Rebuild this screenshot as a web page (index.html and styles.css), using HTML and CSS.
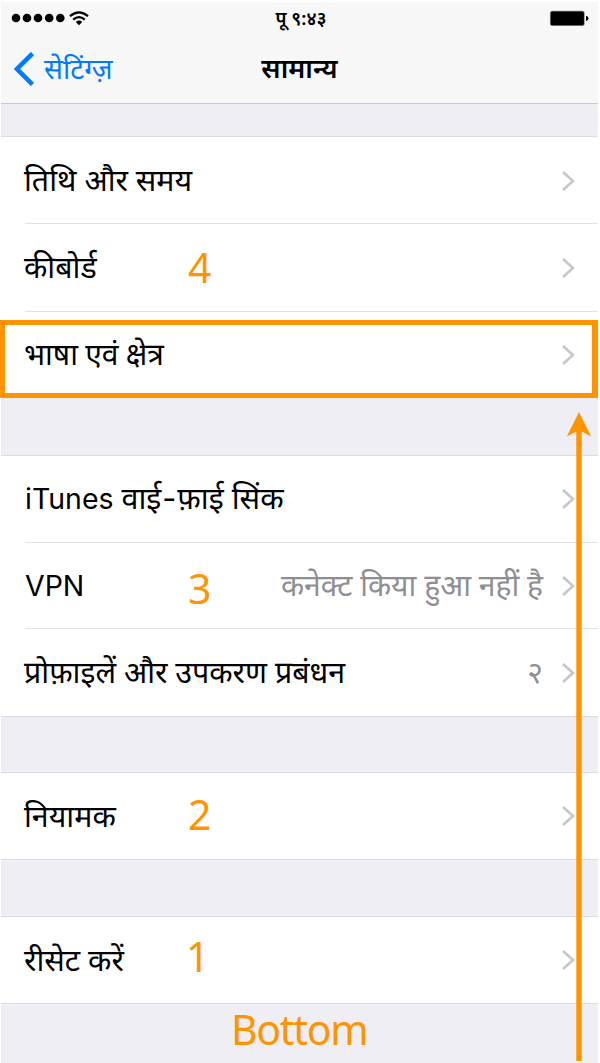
FILE: index.html
```
<!DOCTYPE html>
<html lang="hi">
<head>
<meta charset="utf-8">
<title>सामान्य</title>
<link rel="stylesheet" href="styles.css">
</head>
<body>
<svg class="defs" width="0" height="0"><symbol id="chev" viewBox="0 0 14 22"><path d="M2 2 L12 11 L2 20" fill="none" stroke="#c7c7cc" stroke-width="2.7"/></symbol></svg>
<main class="screen">
  <header class="top">
    <div class="status">
      <div class="signal">
        <svg width="54" height="10" viewBox="0 0 54 10"><circle cx="5" cy="5" r="4.3"/><circle cx="16" cy="5" r="4.3"/><circle cx="27" cy="5" r="4.3"/><circle cx="38.200" cy="5" r="4.3"/><circle cx="49.300" cy="5" r="4.3"/></svg>
        <svg width="20" height="15" viewBox="0 0 20 15"><g fill="none" stroke="#000" stroke-width="2.200"><path d="M1 5.200 Q10 -2.600 19 5.200"/><path d="M4.200 8.600 Q10 3.600 15.800 8.600"/></g><path d="M6.800 11 Q10 8.200 13.200 11 L10 14.300 Z"/></svg>
      </div>
      <div class="time">पू ९:४३</div>
      <svg class="battery" width="40" height="17" viewBox="0 0 40 17"><rect x=".9" y=".7" width="34.800" height="15.300" rx="2.500" fill="#888"/><rect x="1.700" y="1.500" width="33.200" height="13.700" rx="1.500"/><path d="M37 5.700 Q39.500 6.500 39.500 8.300 Q39.500 10.200 37 11 Z"/></svg>
    </div>
    <nav class="nav">
      <div class="back"><svg width="20" height="34" viewBox="0 0 20 34"><path d="M18.500 1.500 L3 17 L18.500 32.500" fill="none" stroke="#007aff" stroke-width="4.500"/></svg><span>सेटिंग्ज़</span></div>
      <h1 class="title">सामान्य</h1>
      <div></div>
    </nav>
  </header>
  <section class="group first">
    <div class="row"><span class="label">तिथि और समय</span><svg class="chev"><use href="#chev"/></svg></div>
    <div class="row"><span class="label">कीबोर्ड</span><b class="step">4</b><svg class="chev"><use href="#chev"/></svg></div>
    <div class="row"><span class="label snug">भाषा एवं क्षेत्र</span><svg class="chev"><use href="#chev"/></svg><i class="highlight"></i></div>
  </section>
  <section class="group second">
    <div class="row"><span class="label wide"><span class="latin">iTunes</span> वाई<span class="hyphen">-</span>फ़ाई सिंक</span><svg class="chev"><use href="#chev"/></svg></div>
    <div class="row"><span class="label latin">VPN</span><b class="step three">3</b><span class="value">कनेक्ट किया हुआ नहीं है</span><svg class="chev"><use href="#chev"/></svg></div>
    <div class="row"><span class="label">प्रोफ़ाइलें और उपकरण प्रबंधन</span><span class="value">२</span><svg class="chev"><use href="#chev"/></svg></div>
  </section>
  <section class="group third">
    <div class="row"><span class="label">नियामक</span><b class="step two">2</b><svg class="chev"><use href="#chev"/></svg></div>
  </section>
  <section class="group fourth">
    <div class="row"><span class="label">रीसेट करें</span><b class="step one">1</b><svg class="chev"><use href="#chev"/></svg></div>
  </section>
  <footer class="bottom">Bottom</footer>
  <svg class="arrow" width="26" height="650" viewBox="0 0 26 650"><path d="M13 0 L25.200 24.500 L15.700 19.500 V649 H10.300 V19.500 L.8 24.500 Z" fill="#ff9300"/></svg>
</main>
</body>
</html>
```

FILE: styles.css
```
* { box-sizing: border-box; }
body { margin: 0; background: #fff; font-family: "Noto Sans", "Noto Sans Devanagari", sans-serif; color: #000; }
.defs { position: absolute; }
.screen { display: flex; flex-direction: column; position: relative; width: 600px; height: 1063px; padding: 2px 2px 0 1px; overflow: hidden; background: linear-gradient(#efeef5, #efeef5) 1px 2px / 597px 1061px no-repeat; }
.top { flex: none; height: 102px; background: #f7f7f8; border-bottom: 1px solid #c8c8cc; }
.status { display: grid; grid-template-columns: 1fr auto 1fr; align-items: center; height: 32px; padding: 0 9px 0 10px; }
.signal { display: flex; align-items: center; gap: 4px; }
.time { font-size: 18.500px; font-weight: 600; line-height: 32px; padding-left: 2px; white-space: nowrap; }
.battery { justify-self: end; }
.nav { display: grid; grid-template-columns: 1fr auto 1fr; align-items: center; height: 69px; }
.back { display: flex; align-items: center; gap: 10px; padding-left: 13px; color: #007aff; font-size: 28px; line-height: 60px; }
.back span, .title { padding-bottom: 2px; }
.title { margin: 0; font-size: 27px; font-weight: 600; line-height: 60px; }
.group { flex: none; display: flex; flex-direction: column; height: 88px; background: #fff; border-top: 1px solid #dcdce0; border-bottom: 1px solid #dcdce0; }
.first { height: 262px; margin-top: 32px; }
.second { height: 262px; margin-top: 57px; }
.third { margin-top: 55px; }
.fourth { margin-top: 56px; }
.row { position: relative; flex: 1; min-height: 0; display: flex; align-items: center; padding: 0 23px 0 23px; font-size: 30.400px; line-height: 60px; white-space: nowrap; }
.first .row { flex: none; height: 87.300px; }
.row + .row::before { content: ""; position: absolute; top: 0; left: 24px; right: 0; height: 1px; margin-top: -1px; background: #e2e2e4; }
.label { flex: 1; padding-bottom: 1px; }
.first .label { padding-bottom: 2px; }
.third .label, .fourth .label { padding-bottom: 1px; }
.snug { font-size: 30px; word-spacing: -.5px; }
.wide { font-size: 30.500px; padding-bottom: 2px; }
.latin { font-family: Inter, sans-serif; font-size: 28.500px; padding-left: 1px; }
.label.latin { padding-bottom: 0; }
.hyphen { font-family: Inter, sans-serif; padding: 0 1px; }
.value { color: #8e8e93; font-size: 30.100px; margin-right: 18px; padding-bottom: 2px; }
.chev { width: 14px; height: 22px; flex: none; }
.step { position: absolute; left: 187px; top: 13px; font-size: 41px; font-weight: 400; color: #ff9300; }
.three { top: 15px; left: 187px; }
.two { top: 11px; left: 187px; }
.one { top: 9px; left: 185px; }
.highlight { position: absolute; left: -1px; top: 8.400px; width: 598px; height: 78px; border: 5px solid #ff9300; border-right-width: 6px; z-index: 1; }
.bottom { height: 60px; color: #ff9300; font-size: 41px; letter-spacing: -1.300px; line-height: 50px; padding-left: 230px; }
.arrow { position: absolute; left: 565.500px; top: 412px; }
```
